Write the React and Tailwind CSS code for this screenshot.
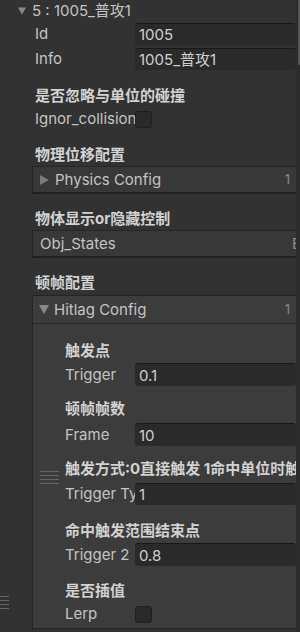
import React from 'react'

function TriDown({ className }){
  return (
    <svg viewBox="0 0 10 9" className={className}>
      <polygon points="0,0 10,0 5,9" fill="#8a8a8a" />
    </svg>
  )
}

function TriRight({ className }){
  return (
    <svg viewBox="0 0 9 10" className={className}>
      <polygon points="0,0 9,5 0,10" fill="#7a7a7a" />
    </svg>
  )
}

function Handle({ className, w }){
  return (
    <div className={'absolute flex flex-col gap-[3px] ' + className}>
      {[0,1,2,3].map(i=> <div key={i} className={'h-px bg-[#666] ' + w} />)}
    </div>
  )
}

function Title({ children, mt, pl }){
  return (
    <div className={'h-[20px] leading-[20px] whitespace-nowrap overflow-hidden font-bold text-[#d2d2d2] ' + mt + ' ' + pl}>
      {children}
    </div>
  )
}

function Field({ label, value, mt, lw, h='h-[22px]' }){
  return (
    <div className={'flex items-center ' + h + ' ' + mt}>
      <div className={'shrink-0 whitespace-nowrap overflow-hidden pr-[2px] leading-[20px] ' + lw}>{label}</div>
      <div className="flex-1 h-full bg-[#2a2a2a] border-t border-[#181818] rounded-[3px] pl-[4px] flex items-center text-[#d0d0d0] whitespace-nowrap">
        {value}
      </div>
    </div>
  )
}

function Check({ label, mt, lw }){
  return (
    <div className={'flex items-center h-[22px] ' + mt}>
      <div className={'shrink-0 whitespace-nowrap overflow-hidden pr-[2px] leading-[20px] ' + lw}>{label}</div>
      <div className="w-[17px] h-[17px] bg-[#2a2a2a] border border-[#1f1f1f] rounded-[3px]" />
    </div>
  )
}

export default function App(){
  return (
    <div className="w-[300px] h-[632px] overflow-hidden bg-[#323232] flex text-[15px] leading-none text-[#c4c4c4] font-['Inter','Noto_Sans_CJK_SC',sans-serif]">
      <div className="relative w-[296px] shrink-0">
        <div className="h-[22px] flex items-center pl-[18px] pb-[1px]">
          <TriDown className="w-[8px] h-[8px]" />
          <span className="ml-[6px] whitespace-nowrap">5 : 1005_普攻1</span>
        </div>
        <Field label="Id" value="1005" mt="mt-[1px]" lw="w-[135px] pl-[35px]" />
        <Field label="Info" value="1005_普攻1" mt="mt-[3px]" lw="w-[135px] pl-[35px]" />

        <Title mt="mt-[16px]" pl="pl-[35px]">是否忽略与单位的碰撞</Title>
        <Check label="Ignor_collision" mt="mt-[2px]" lw="w-[135px] pl-[35px]" />

        <Title mt="mt-[15px]" pl="pl-[35px]">物理位移配置</Title>
        <div className="mt-[1px] ml-[32px] h-[28px] bg-[#383838] border-l border-l-[#262626] border-t border-t-[#262626] border-b-2 border-b-[#1f1f1f] flex items-center pl-[7px]">
          <TriRight className="w-[9px] h-[10px]" />
          <span className="ml-[6px] whitespace-nowrap">Physics Config</span>
          <span className="ml-auto mr-[6px] text-[13px] text-[#8a8a8a]">1</span>
        </div>

        <Title mt="mt-[15px]" pl="pl-[35px]">物体显示or隐藏控制</Title>
        <div className="mt-[1px] ml-[32px] h-[28px] bg-[#383838] border-l border-l-[#262626] border-t border-t-[#262626] border-b-2 border-b-[#1f1f1f] flex items-center pl-[7px]">
          <span className="whitespace-nowrap">Obj_States</span>
          <span className="ml-auto w-[4px] overflow-hidden text-[#8a8a8a] leading-[20px]">E</span>
        </div>

        <Title mt="mt-[15px]" pl="pl-[35px]">顿帧配置</Title>
        <div className="mt-[2px] ml-[32px] h-[334px] bg-[#3c3c3c] border-l border-t border-b border-[#242424]">
          <div className="h-[28px] border-b border-[#262626] flex items-center pl-[6px]">
            <TriDown className="w-[10px] h-[9px]" />
            <span className="ml-[5px] whitespace-nowrap">Hitlag Config</span>
            <span className="ml-auto mr-[6px] text-[13px] text-[#8a8a8a]">1</span>
          </div>
          <Title mt="mt-[17px]" pl="pl-[32px]">触发点</Title>
          <Field label="Trigger" value="0.1" mt="mt-[2px]" lw="w-[102px] pl-[32px]" h="h-[23px]" />
          <Title mt="mt-[13px]" pl="pl-[32px]">顿帧帧数</Title>
          <Field label="Frame" value="10" mt="mt-[4px]" lw="w-[102px] pl-[32px]" h="h-[23px]" />
          <Title mt="mt-[13px]" pl="pl-[32px]">触发方式:0直接触发 1命中单位时触发</Title>
          <Field label="Trigger Type" value="1" mt="mt-[4px]" lw="w-[102px] pl-[32px]" />
          <Title mt="mt-[16px]" pl="pl-[32px]">命中触发范围结束点</Title>
          <Field label="Trigger 2" value="0.8" mt="mt-[2px]" lw="w-[102px] pl-[32px]" h="h-[23px]" />
          <Title mt="mt-[15px]" pl="pl-[32px]">是否插值</Title>
          <Check label="Lerp" mt="mt-[2px]" lw="w-[102px] pl-[32px]" />
        </div>

        <Handle className="left-[40px] top-[471px]" w="w-[19px]" />
        <Handle className="left-0 top-[596px]" w="w-[9px]" />
      </div>
      <div className="w-[4px] shrink-0 bg-[#2c2c2c]">
        <div className="ml-[2px] w-[2px] h-[65px] bg-[#555]" />
      </div>
    </div>
  )
}
